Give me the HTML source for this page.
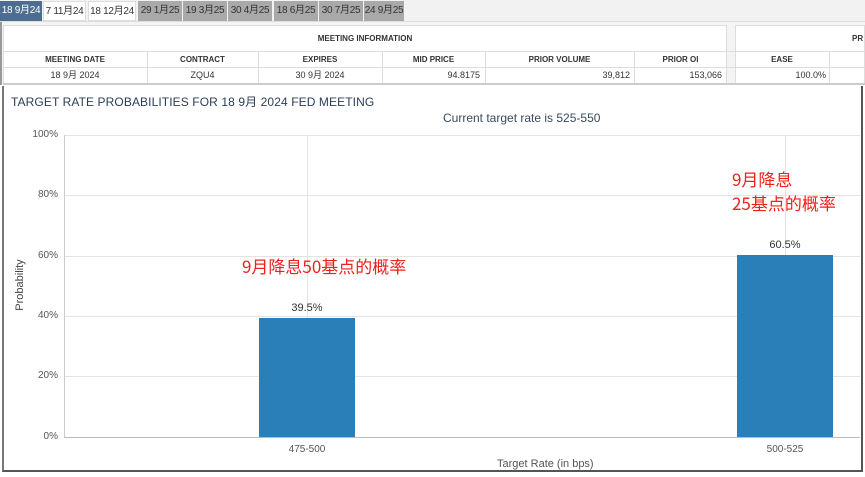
<!DOCTYPE html>
<html><head><meta charset="utf-8"><style>
*{margin:0;padding:0;box-sizing:border-box}
body{width:865px;height:477px;overflow:hidden;background:#fff;font-family:"Liberation Sans","Noto Sans CJK SC",sans-serif;position:relative}
.a{position:absolute}
.tab{position:absolute;top:1px;height:20px;font-size:10px;line-height:20px;text-align:center;color:#333;letter-spacing:-0.3px}
.th{position:absolute;font-size:8px;font-weight:bold;color:#333;text-align:center;line-height:15px}
.td{position:absolute;font-size:9px;color:#333;line-height:15px}
.yl{position:absolute;left:20px;width:38px;text-align:right;font-size:10px;color:#555}
.g{position:absolute;left:64px;width:796px;height:1px;background:#e3e3e3}
.red{color:#f0201a;font-family:"Noto Sans CJK SC",sans-serif;font-size:17px}
</style></head><body>
<div class="a" style="left:0;top:0;width:865px;height:22px;background:#f2f2f2;border-bottom:1px solid #ddd"></div>
<div class="tab" style="left:0;width:42px;background:#4c6d8f;color:#fff">18 9月24</div>
<div class="tab" style="left:43px;width:43px;background:#fff;border:1px solid #ddd">7 11月24</div>
<div class="tab" style="left:88px;width:48px;background:#fff;border:1px solid #ddd">18 12月24</div>
<div class="tab" style="left:138px;width:44px;background:#a9a9a9">29 1月25</div>
<div class="tab" style="left:183px;width:44px;background:#a9a9a9">19 3月25</div>
<div class="tab" style="left:228px;width:44px;background:#a9a9a9">30 4月25</div>
<div class="tab" style="left:274px;width:44px;background:#a9a9a9">18 6月25</div>
<div class="tab" style="left:319px;width:44px;background:#a9a9a9">30 7月25</div>
<div class="tab" style="left:364px;width:40px;background:#a9a9a9">24 9月25</div>
<div class="a" style="left:0;top:22px;width:865px;height:63px;background:#f4f4f4;border-left:2px solid #999"></div>
<div class="a" style="left:3px;top:25px;width:724px;height:60px;background:#fff;border:1px solid #ddd"></div>
<div class="a" style="left:735px;top:25px;width:130px;height:60px;background:#fff;border:1px solid #ddd"></div>
<div class="th" style="left:3px;width:724px;top:31px">MEETING INFORMATION</div>
<div class="th" style="left:852px;top:31px;text-align:left">PR</div>
<div class="a" style="left:3px;top:51px;width:862px;height:1px;background:#ddd"></div>
<div class="a" style="left:3px;top:67px;width:862px;height:1px;background:#ddd"></div>
<div class="a" style="left:3px;top:83px;width:862px;height:2px;background:#ccc"></div>
<div class="a" style="left:147px;top:52px;width:1px;height:31px;background:#ddd"></div>
<div class="a" style="left:258px;top:52px;width:1px;height:31px;background:#ddd"></div>
<div class="a" style="left:382px;top:52px;width:1px;height:31px;background:#ddd"></div>
<div class="a" style="left:485px;top:52px;width:1px;height:31px;background:#ddd"></div>
<div class="a" style="left:634px;top:52px;width:1px;height:31px;background:#ddd"></div>
<div class="a" style="left:829px;top:52px;width:1px;height:31px;background:#ddd"></div>
<div class="th" style="left:3px;width:144px;top:52px">MEETING DATE</div>
<div class="th" style="left:147px;width:111px;top:52px">CONTRACT</div>
<div class="th" style="left:258px;width:124px;top:52px">EXPIRES</div>
<div class="th" style="left:382px;width:103px;top:52px">MID PRICE</div>
<div class="th" style="left:485px;width:149px;top:52px">PRIOR VOLUME</div>
<div class="th" style="left:634px;width:93px;top:52px">PRIOR OI</div>
<div class="th" style="left:735px;width:94px;top:52px">EASE</div>
<div class="td" style="left:3px;width:144px;top:68px;text-align:center">18 9月 2024</div>
<div class="td" style="left:147px;width:111px;top:68px;text-align:center">ZQU4</div>
<div class="td" style="left:258px;width:124px;top:68px;text-align:center">30 9月 2024</div>
<div class="td" style="left:382px;width:98px;top:68px;text-align:right">94.8175</div>
<div class="td" style="left:485px;width:145px;top:68px;text-align:right">39,812</div>
<div class="td" style="left:634px;width:88px;top:68px;text-align:right">153,066</div>
<div class="td" style="left:735px;width:91px;top:68px;text-align:right">100.0%</div>
<div class="a" style="left:2px;top:86px;width:861px;height:386px;border-left:2px solid #777;border-right:2px solid #555;border-bottom:2px solid #555"></div>
<div class="a" style="left:11px;top:93px;font-size:12px;color:#2c3e57;letter-spacing:0.1px">TARGET RATE PROBABILITIES FOR 18 9月 2024 FED MEETING</div>
<div class="a" style="left:443px;top:111px;font-size:12px;color:#3a4a5c">Current target rate is 525-550</div>
<div class="g" style="top:135px"></div><div class="g" style="top:195px"></div><div class="g" style="top:256px"></div><div class="g" style="top:316px"></div><div class="g" style="top:376px"></div>
<div class="a" style="left:64px;top:437px;width:796px;height:1px;background:#bbb"></div>
<div class="a" style="left:64px;top:135px;width:1px;height:302px;background:#ccc"></div>
<div class="a" style="left:307px;top:135px;width:1px;height:302px;background:#e3e3e3"></div>
<div class="a" style="left:785px;top:135px;width:1px;height:302px;background:#e3e3e3"></div>
<div class="yl" style="top:129px">100%</div><div class="yl" style="top:189px">80%</div><div class="yl" style="top:250px">60%</div><div class="yl" style="top:310px">40%</div><div class="yl" style="top:370px">20%</div><div class="yl" style="top:431px">0%</div>
<div class="a" style="left:-10px;top:279px;width:60px;text-align:center;font-size:11px;color:#444;transform:rotate(-90deg)">Probability</div>
<div class="a" style="left:259px;top:318px;width:96px;height:119px;background:#2a7fb8"></div>
<div class="a" style="left:737px;top:255px;width:96px;height:182px;background:#2a7fb8"></div>
<div class="a" style="left:259px;top:302px;width:96px;text-align:center;font-size:11px;color:#333">39.5%</div>
<div class="a" style="left:737px;top:239px;width:96px;text-align:center;font-size:11px;color:#333">60.5%</div>
<div class="a" style="left:259px;top:444px;width:96px;text-align:center;font-size:10px;color:#555">475-500</div>
<div class="a" style="left:737px;top:444px;width:96px;text-align:center;font-size:10px;color:#555">500-525</div>
<div class="a" style="left:497px;top:458px;font-size:11px;color:#555">Target Rate (in bps)</div>
<div class="a red" style="left:242px;top:253px">9月降息50基点的概率</div>
<div class="a red" style="left:732px;top:167px;line-height:24px">9月降息<br>25基点的概率</div>
</body></html>
